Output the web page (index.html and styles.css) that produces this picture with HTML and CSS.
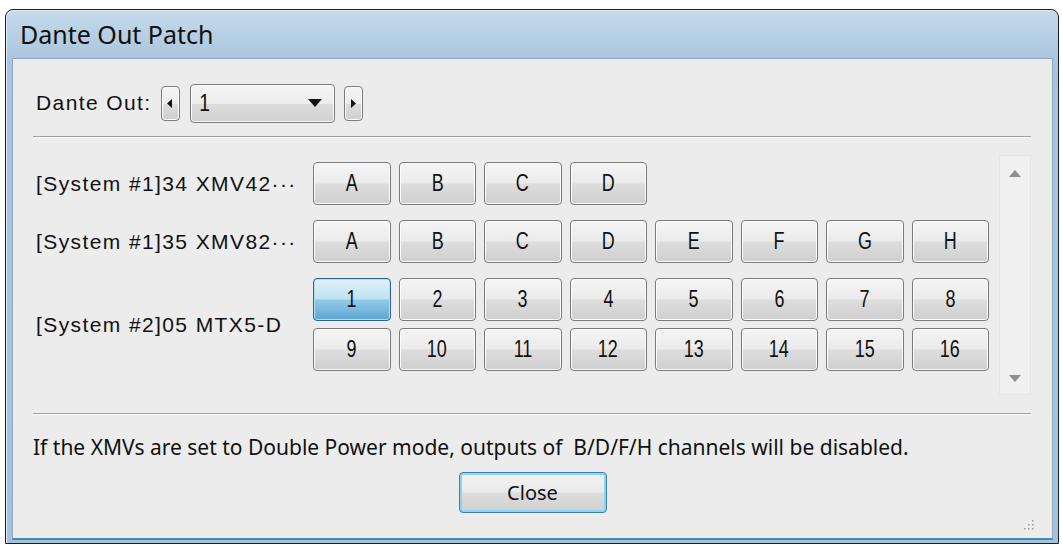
FILE: index.html
```html
<!DOCTYPE html>
<html>
<head>
<meta charset="utf-8">
<title>Dante Out Patch</title>
<link rel="stylesheet" href="styles.css">
</head>
<body>
<div class="window">
  <div class="titlebar">Dante Out Patch</div>
  <div class="client">
    <div class="selector">
      <span class="sel-label">Dante Out:</span>
      <button class="spin spin-left"><svg width="6" height="9" viewBox="0 0 6 9"><path d="M5 0 L0 4.5 L5 9 Z" fill="#111"/></svg></button>
      <div class="combo"><span class="combo-value">1</span><svg width="14" height="8" viewBox="0 0 14 8"><path d="M0 0 H14 L7 8 Z" fill="#111"/></svg></div>
      <button class="spin spin-right"><svg width="6" height="9" viewBox="0 0 6 9"><path d="M1 0 L6 4.5 L1 9 Z" fill="#111"/></svg></button>
    </div>
    <div class="sep"></div>
    <div class="patch">
      <div class="patch-list">
        <div class="dev-row">
          <div class="dev-label">[System #1]34 XMV42···</div>
          <div class="ch-grid">
            <button class="ch"><span>A</span></button><button class="ch"><span>B</span></button><button class="ch"><span>C</span></button><button class="ch"><span>D</span></button>
          </div>
        </div>
        <div class="dev-row">
          <div class="dev-label">[System #1]35 XMV82···</div>
          <div class="ch-grid">
            <button class="ch"><span>A</span></button><button class="ch"><span>B</span></button><button class="ch"><span>C</span></button><button class="ch"><span>D</span></button>
            <button class="ch"><span>E</span></button><button class="ch"><span>F</span></button><button class="ch"><span>G</span></button><button class="ch"><span>H</span></button>
          </div>
        </div>
        <div class="dev-row">
          <div class="dev-label">[System #2]05 MTX5-D</div>
          <div class="ch-grid two-rows">
            <button class="ch ch-on"><span>1</span></button><button class="ch"><span>2</span></button><button class="ch"><span>3</span></button><button class="ch"><span>4</span></button>
            <button class="ch"><span>5</span></button><button class="ch"><span>6</span></button><button class="ch"><span>7</span></button><button class="ch"><span>8</span></button>
            <button class="ch"><span>9</span></button><button class="ch"><span>10</span></button><button class="ch"><span>11</span></button><button class="ch"><span>12</span></button>
            <button class="ch"><span>13</span></button><button class="ch"><span>14</span></button><button class="ch"><span>15</span></button><button class="ch"><span>16</span></button>
          </div>
        </div>
      </div>
      <div class="scrollbar">
        <svg width="12" height="7" viewBox="0 0 12 7"><path d="M0 7 L6 0 L12 7 Z" fill="#8e8e8e"/></svg>
        <svg width="12" height="7" viewBox="0 0 12 7"><path d="M0 0 L12 0 L6 7 Z" fill="#8e8e8e"/></svg>
      </div>
    </div>
    <div class="sep sep-bottom"></div>
    <p class="note">If the XMVs are set to Double Power mode, outputs of&nbsp; B/D/F/H channels will be disabled.</p>
    <div class="actions"><button class="close-btn">Close</button></div>
    <div class="grip">
      <svg width="10" height="10" viewBox="0 0 10 10">
        <rect x="8" y="0" width="1.5" height="1.5" fill="#9a9a9a"/>
        <rect x="4" y="4" width="1.5" height="1.5" fill="#9a9a9a"/><rect x="8" y="4" width="1.5" height="1.5" fill="#9a9a9a"/>
        <rect x="0" y="8" width="1.5" height="1.5" fill="#9a9a9a"/><rect x="4" y="8" width="1.5" height="1.5" fill="#9a9a9a"/><rect x="8" y="8" width="1.5" height="1.5" fill="#9a9a9a"/>
      </svg>
    </div>
  </div>
</div>
</body>
</html>
```

FILE: styles.css
```css
* { box-sizing: border-box; }
html, body { margin: 0; padding: 0; }
body {
  background: #ffffff;
  width: 1062px;
  height: 551px;
  overflow: hidden;
  font-family: "Liberation Sans", Arial, sans-serif;
}
.window {
  margin: 9px 3px 0 5px;
  height: 535px;
  border: 1px solid #1e1e1e;
  border-radius: 8px 8px 0 0;
  background: linear-gradient(to bottom, #c6daeb 0px, #aac6de 48px, #a4c2dc 100%);
  display: flex;
  flex-direction: column;
  box-shadow: inset 1px 1px 0 #e4eef7;
}
.titlebar {
  height: 48px;
  flex: none;
  padding-left: 14px;
  display: flex;
  align-items: center;
  font-family: "Noto Sans", "Liberation Sans", sans-serif;
  font-size: 25px;
  color: #111;
}
.client {
  position: relative;
  flex: 1;
  margin: 0 5px 3px 6px;
  background: #ececec;
  border: 1px solid #8eaac2;
  border-bottom: 2px solid #3f8db0;
  display: flex;
  flex-direction: column;
}
.selector {
  margin-top: 25px;
  height: 38px;
  padding-left: 23px;
  display: flex;
  align-items: center;
}
.sel-label {
  font-size: 21px;
  letter-spacing: 1.4px;
  color: #111;
  margin-right: 9px;
}
.spin {
  width: 19px;
  height: 35px;
  padding: 0;
  border: 1px solid #7c7c7c;
  border-radius: 4px;
  background: linear-gradient(to bottom, #f4f4f4 0%, #ececec 50%, #dcdcdc 52%, #cfcfcf 100%);
  box-shadow: inset 0 0 0 1px #fbfbfb;
  display: flex;
  align-items: center;
  justify-content: center;
}
.combo {
  width: 145px;
  height: 39px;
  margin: 0 9px 0 10px;
  border: 1px solid #7c7c7c;
  border-radius: 4px;
  background: linear-gradient(to bottom, #f4f4f4 0%, #ececec 50%, #dcdcdc 52%, #d0d0d0 100%);
  box-shadow: inset 0 0 0 1px #fbfbfb;
  display: flex;
  align-items: center;
  justify-content: space-between;
  padding: 0 12px 0 7px;
}
.combo-value {
  display: inline-block;
  font-size: 24px;
  color: #111;
  transform: scaleX(0.8);
}
.sep {
  margin: 14px 21px 0 20px;
  height: 2px;
  border-top: 1px solid #a0a0a0;
  border-bottom: 1px solid #ffffff;
  flex: none;
}
.patch {
  margin-top: 14px;
  height: 243px;
  display: flex;
  justify-content: space-between;
  padding-right: 21px;
}
.patch-list {
  padding: 10px 0 0 23px;
  display: flex;
  flex-direction: column;
  gap: 15px;
}
.dev-row {
  display: flex;
  align-items: center;
}
.dev-label {
  width: 277px;
  font-size: 21px;
  letter-spacing: 1.4px;
  color: #111;
  white-space: nowrap;
}
.ch-grid {
  width: 676px;
  display: grid;
  grid-template-columns: repeat(8, 1fr);
  column-gap: 8px;
  row-gap: 7px;
}
.ch {
  height: 43px;
  padding: 0;
  border: 1px solid #7a7a7a;
  border-radius: 4px;
  background: linear-gradient(to bottom, #f5f5f5 0%, #ebebeb 48%, #dddddd 52%, #cfcfcf 100%);
  box-shadow: inset 0 0 0 1px #fcfcfc;
  font-family: "Liberation Sans", Arial, sans-serif;
  font-size: 23px;
  color: #111;
}
.ch span {
  display: inline-block;
  transform: scaleX(0.78);
}
.ch-on {
  border-color: #2c628b;
  background: linear-gradient(to bottom, #dff1fa 0%, #c0e2f3 48%, #93cae8 52%, #5ca5d2 100%);
  box-shadow: inset 0 0 0 1px #b4def3;
}
.scrollbar {
  margin-top: 3px;
  width: 32px;
  height: 240px;
  background: #f0f0f0;
  border: 1px solid #e6e6e6;
  display: flex;
  flex-direction: column;
  align-items: center;
  justify-content: space-between;
  padding: 14px 0 12px;
}
.sep-bottom {
  margin-top: 18px;
}
.note {
  margin: 19px 0 0 20px;
  font-family: "Noto Sans", "Liberation Sans", sans-serif;
  font-size: 21px;
  line-height: 26px;
  color: #111;
}
.actions {
  margin-top: 12px;
  display: flex;
  justify-content: center;
}
.close-btn {
  width: 148px;
  height: 41px;
  border: 1px solid #3c7fb1;
  border-radius: 4px;
  background: linear-gradient(to bottom, #f2f2f2 0%, #ebebeb 48%, #dddddd 52%, #cfcfcf 100%);
  box-shadow: inset 0 0 0 2px #8fd3f2;
  font-family: "Noto Sans", "Liberation Sans", sans-serif;
  font-size: 20px;
  color: #111;
}
.grip {
  position: absolute;
  right: 18px;
  bottom: 8px;
  width: 10px;
  height: 10px;
  display: flex;
}
```
